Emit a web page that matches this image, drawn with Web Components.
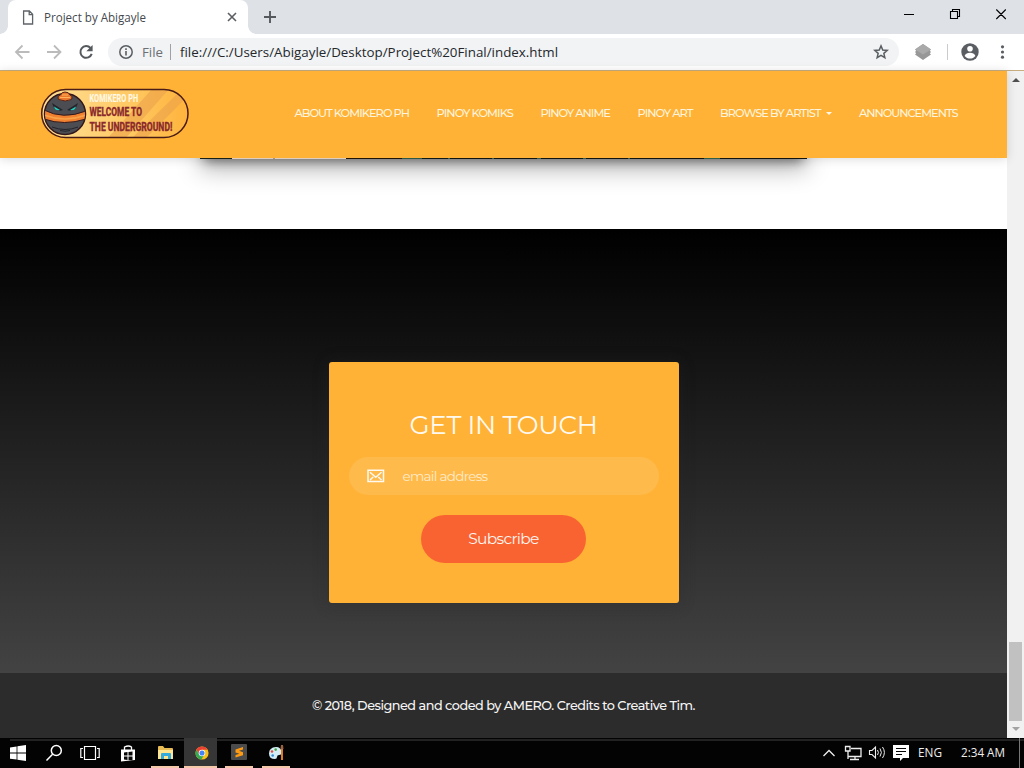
<!DOCTYPE html>
<html lang="en"><head><meta charset="utf-8"><title>Project by Abigayle</title>
<style>body{margin:0;width:1024px;height:768px;overflow:hidden;background:#fff;font-family:"Open Sans","Noto Sans",sans-serif}</style></head>
<body><desk-top></desk-top>
<script>
const define=(name,html,after)=>{
  const t=document.createElement('template');t.innerHTML=html;
  customElements.define(name,class extends HTMLElement{
    connectedCallback(){
      if(this.shadowRoot)return;
      this.attachShadow({mode:'open'}).appendChild(t.content.cloneNode(true));
      if(after)after(this,this.shadowRoot);
    }
  });
};

/* One line of text set to a given width (attribute w), by scaling or, with attribute tight, by tracking. */
define('fit-text',`<style>:host{display:inline-block;white-space:nowrap;flex:none;text-align:left}span{display:inline-block;transform-origin:0 50%}</style><span><slot></slot></span>`,(el,root)=>{
  const s=root.querySelector('span'),w=+el.getAttribute('w'),n=s.getBoundingClientRect().width;
  el.style.width=w+'px';
  if(el.hasAttribute('tight'))s.style.letterSpacing=(w-n)/el.textContent.length+'px';
  else s.style.transform='scaleX('+w/n+')';
});

define('browser-tabs',`<style>
:host{display:flex;height:34px;background:#dee1e6;padding-left:8px;align-items:stretch}
.tab{width:240px;box-sizing:border-box;background:#fff;border-radius:8px 8px 0 0;display:flex;align-items:center;padding:0 10px 0 14px;font-size:12px;color:#45494d;position:relative}
.tab:before,.tab:after{content:"";position:absolute;bottom:0;width:8px;height:8px}
.tab:before{left:-8px;background:radial-gradient(circle at 0 0,transparent 7.5px,#fff 8px)}
.tab:after{right:-8px;background:radial-gradient(circle at 100% 0,transparent 7.5px,#fff 8px)}
.tab fit-text{margin-left:10px;margin-right:auto}
svg{display:block;flex:none}.plus{margin:10px 0 0 15px}.win{margin-left:auto;width:124px;height:34px}
</style>
<div class="tab"><svg width="12" height="15" fill="none" stroke="#5f6368" stroke-width="1.3"><path d="M1.6 1h5.8l3.2 3.3V14h-9zM7.2 1v3.6h3.4"/></svg><fit-text w="102">Project by Abigayle</fit-text>
<svg width="12" height="12" stroke="#5a5e62" stroke-width="1.6"><path d="M2 2l8 8M10 2l-8 8"/></svg></div>
<svg class="plus" width="14" height="14" stroke="#55595d" stroke-width="1.9"><path d="M7 1v12M1 7h12"/></svg>
<svg class="win" fill="none" stroke="#000" stroke-width="1"><path d="M4 14.5h10M50.500 11.500h7v7h-7zM52.500 11.500v-2h7v7h-2M96.300 9.500l9.500 9.500M105.800 9.500l-9.500 9.500" stroke-width="1.1"/></svg>`);

define('address-bar',`<style>
:host{display:flex;height:36px;background:#fff;align-items:center;padding-left:12px;border-bottom:1px solid #c8ad80;font-size:13px;box-sizing:content-box}
svg{display:block;flex:none}.nav{width:96px;height:36px}
.url{width:791px;height:28px;border-radius:14px;background:#f1f3f4;display:flex;align-items:center;box-sizing:border-box;padding:0 10px;color:#24282c}
.file{color:#6c7075;margin-left:8px}.bar{width:1px;height:16px;background:#9fa2a5;margin:0 9px 0 7px}
.star{margin-left:auto}.right{width:125px;height:36px}
</style>
<svg class="nav" fill="none" stroke-width="1.8"><path d="M17.500 18H4.500M10.500 11.500L4 18l6.500 6.500M35 18h13M42 11.500L48.500 18 42 24.500" stroke="#bbb"/><path d="M78.500 14a5.800 5.800 0 1 0 1.200 5.800" stroke="#55595d" stroke-width="2"/><path d="M80.600 11v6.300h-6.300z" fill="#55595d"/></svg>
<div class="url"><svg width="16" height="16"><circle cx="8" cy="8" r="6.200" fill="none" stroke="#5a5e62" stroke-width="1.5"/><path d="M8 7v4.500M8 4.300v1.700" stroke="#5a5e62" stroke-width="1.6"/></svg><fit-text class="file" w="21">File</fit-text><i class="bar"></i><fit-text w="378">file:///C:/Users/Abigayle/Desktop/Project%20Final/index.html</fit-text>
<svg class="star" width="16" height="16" fill="none" stroke="#5a5e62" stroke-width="1.5"><path d="M8 1.900l1.750 4.100 4.450.4-3.350 2.950 1 4.350L8 11.400l-3.850 2.300 1-4.350L1.800 6.400l4.450-.4z"/></svg></div>
<svg class="right"><path d="M16 15.500l8-5.500 8 5.500-1.200 1.200L32 18l-1.200 1.200L32 20.500 24 26l-8-5.500 1.200-1.300L16 18l1.200-1.300z" fill="#979797"/><path d="M16 15.500l8-5.500 8 5.500-8 5z" fill="#a9a9a9"/><path d="M48.500 10v16" stroke="#c9cbcd"/><circle cx="71" cy="18" r="8.700" fill="#5a5e62"/><circle cx="71" cy="14.700" r="2.800" fill="#fff"/><path d="M65.600 22c1.400-4.400 9.400-4.400 10.800 0-2.700 3.400-8.100 3.400-10.800 0z" fill="#fff"/><g fill="#5a5e62"><circle cx="103.500" cy="12.800" r="1.600"/><circle cx="103.500" cy="18" r="1.600"/><circle cx="103.500" cy="23.200" r="1.600"/></g></svg>`);

define('site-logo',`<style>:host{display:block;width:150px;height:52px}svg{display:block}text{font-family:"Roboto","Liberation Sans",sans-serif;font-weight:800}</style>
<svg width="150" height="52" viewBox="0 0 150 52"><defs><clipPath id="p"><rect x="2" y="2" width="146" height="47" rx="23.500"/></clipPath><clipPath id="h"><circle cx="25" cy="26" r="20"/></clipPath><linearGradient id="g"><stop stop-color="#ffdf96"/><stop offset=".6" stop-color="#ffc963"/><stop offset="1" stop-color="#ffb33c"/></linearGradient></defs>
<rect x="2" y="2" width="146" height="47" rx="23.500" fill="url(#g)"/>
<g clip-path="url(#p)"><path d="M113 0h17L84 52H66zM139 4l8 5-43 43H90z" fill="#eba24b" opacity=".6"/></g>
<rect x="1.700" y="1.500" width="146.300" height="48" rx="24" fill="none" stroke="#4a1c17" stroke-width="1.500"/>
<circle cx="25" cy="26" r="20.500" fill="#4b4d53" stroke="#32171b" stroke-width="1.500"/>
<g clip-path="url(#h)"><path d="M4 22q19 10 42 1v8q-22 7-42 0z" fill="#ef8130" stroke="#36191c"/><path d="M4 27q21 8 42 0" stroke="#f9a348" stroke-width="1.500" fill="none"/><path d="M12 15l11 7q-8 3-11-7zM38 15l-11 7q8 3 11-7z" fill="#24242a"/><path d="M14 18.500l6 3.500q-4.500 1.500-6-3.500zM36 18.500l-6 3.500q4.500 1.500 6-3.500z" fill="#22d0c0"/><path d="M12 39q13 5 26 0M20 42.500q5 1.500 10 0" stroke="#24252c" fill="none"/></g>
<path d="M18.500 11.500q-1.500-3.500 2-4.500 1-3 4.500-3 4 0 5 3 3 1 1.500 4.500-6 3-13 0z" fill="#e9782c" stroke="#542119"/><path d="M20 9.500h10M22 7h6" stroke="#ffb25c" stroke-width="1"/>
<text transform="translate(49.500 14.300) scale(.68 1)" font-size="11" fill="#fff8e5" textLength="71.500" lengthAdjust="spacingAndGlyphs">KOMIKERO PH</text>
<g fill="#8b2a2c" stroke="#8b2a2c" stroke-width=".3"><text transform="translate(49.500 28) scale(.6 1)" font-size="13.300" textLength="87.500" lengthAdjust="spacingAndGlyphs">WELCOME TO</text><text transform="translate(49.500 42.500) scale(.6 1)" font-size="13.300" textLength="138" lengthAdjust="spacingAndGlyphs">THE UNDERGROUND!</text></g></svg>`);

define('nav-link',`<style>:host{display:flex;align-items:center;color:#fff4dd;font:500 11.400px/16px "Montserrat","Inter",sans-serif}</style><slot></slot>`);
define('site-nav',`<style>
:host{display:flex;height:87px;background:#ffb236;align-items:center;padding:0 49.500px 0 40px;box-sizing:border-box;box-shadow:0 1px 10px rgba(0,0,0,.15);position:relative;z-index:1}
site-logo{margin-bottom:1px}
nav{margin-left:auto;display:flex;gap:27.500px;margin-bottom:3px}i{border:3px solid transparent;border-top-color:#fff8e8;border-bottom:0;margin-left:5px}
</style><site-logo></site-logo><nav>
<nav-link><fit-text tight w="114.5">ABOUT KOMIKERO PH</fit-text></nav-link><nav-link><fit-text tight w="76.5">PINOY KOMIKS</fit-text></nav-link><nav-link><fit-text tight w="69.5">PINOY ANIME</fit-text></nav-link><nav-link><fit-text tight w="55">PINOY ART</fit-text></nav-link><nav-link><fit-text tight w="100.500">BROWSE BY ARTIST</fit-text><i></i></nav-link><nav-link><fit-text tight w="98.500">ANNOUNCEMENTS</fit-text></nav-link></nav>`);

/* Bottom edge of the picture that is scrolled away under the navigation bar. */
define('picture-edge',`<style>
:host{display:block;height:71px;background:#fff;overflow:hidden;clip-path:inset(0)}
div{width:607px;margin:-19px 0 0 200px;height:20px;box-shadow:0 10px 25px rgba(0,0,0,.3),0 6px 12px -4px rgba(0,0,0,.5);background:linear-gradient(90deg,#18231a 0 32px,#f5dfce 32px 73px,#b99e81 73px 75px,#f5dfce 75px 146px,#221507 146px 202px,#345f4d 202px 222px,#101b16 222px 248px,#416655 248px 250px,#121512 250px 292px,#41664d 292px 294px,#121512 294px 337px,#416655 337px 341px,#121512 341px 383px,#416655 383px 386px,#121512 386px 428px,#416655 428px 430px,#121512 430px 504px,#34664d 504px 520px,#121512 520px)}
</style><div></div>`);

define('touch-card',`<style>
:host{display:flex;flex-direction:column;align-items:center;box-sizing:border-box;width:350px;height:241px;border-radius:3px;background:#ffb236;padding:46px 20px 0;font-family:"Montserrat","Inter",sans-serif;box-shadow:0 1px 15px 1px rgba(39,39,39,.3)}
h4{margin:0;font:400 26px/34px "Montserrat","Inter",sans-serif;color:#fffaf0}
.field{margin-top:15px;width:310px;height:38px;border-radius:19px;background:#ffba4c;display:flex;align-items:center;box-sizing:border-box;padding-left:18px;font-size:13.500px;color:#ffecca}
.field fit-text{margin-left:18px}
button{margin:20px 0 0;border:0;padding:0;width:165px;height:48px;border-radius:24px;background:#f96332;color:#fff6f0;font:400 15.500px/20px "Montserrat","Inter",sans-serif}
</style><h4><fit-text tight w="188">GET IN TOUCH</fit-text></h4>
<div class="field"><svg width="18" height="14" fill="none" stroke="#fffaf0" stroke-width="1.500"><path d="M1 1.200h15.500v11.200H1zM3 3.300l5.750 5 5.750-5M3 11l3.200-3M14.500 11l-3.200-3"/></svg><fit-text tight w="85">email address</fit-text></div>
<button><fit-text tight w="70.500">Subscribe</fit-text></button>`);
define('contact-section',`<style>:host{display:flex;justify-content:center;height:444px;box-sizing:border-box;padding-top:133px;background:linear-gradient(#000,#434343)}</style><touch-card></touch-card>`);
define('site-footer',`<style>:host{display:flex;height:65px;align-items:center;justify-content:center;background:#2c2c2c;color:#f5f5f5;font:500 12.800px/18px "Montserrat","Inter",sans-serif}</style><fit-text tight w="383">© 2018, Designed and coded by AMERO. Credits to Creative Tim.</fit-text>`);

define('scroll-bar',`<style>
:host{display:flex;flex-direction:column;align-items:center;width:17px;background:#f1f1f1;height:667px}
i{border:4px solid transparent}.up{border-bottom-color:#505050;border-top:0;margin-top:7px}.down{border-top-color:#a3a3a3;border-bottom:0;margin:6px 0 7px}.thumb{width:13px;height:79px;background:#c1c1c1;margin-top:auto}
</style><i class="up"></i><div class="thumb"></div><i class="down"></i>`);

define('task-button',`<style>:host{display:flex;width:28px;height:30px;box-sizing:border-box;align-items:center;justify-content:center;flex:none}:host([open]){border-bottom:2px solid #f6c8aa}:host([active]){width:33px;background:#363636}</style><slot></slot>`);
define('task-bar',`<style>
:host{display:flex;height:30px;background:#030303;color:#eee;font-size:12px;padding-left:4px;box-sizing:border-box;align-items:stretch;background-image:linear-gradient(#222,#222);background-size:1014px 2px;background-position:10px 1px;background-repeat:no-repeat}
svg{display:block}.left{display:flex}.tray{margin-left:auto;display:flex;align-items:center}.end{width:4px;height:30px;border-left:1px solid #777;margin-left:14px}
.lang{margin-left:8px}.time{margin-left:19px;margin-bottom:2px}.lang{margin-bottom:1px}
</style><div class="left">
<task-button><svg width="16" height="16" fill="#fff"><path d="M0 2.400l6.600-1v6.200H0zM7.400 1.300L16 0v7.600H7.400zM0 8.400h6.600v6.200L0 13.700zM7.400 8.400H16V16l-8.600-1.300z"/></svg></task-button>
<task-button style="margin-left:8px"><svg width="18" height="18" fill="none" stroke="#fff" stroke-width="1.500"><circle cx="11.300" cy="6.500" r="5"/><path d="M7.600 10.200L1.500 16.500"/></svg></task-button>
<task-button style="margin-left:8px"><svg width="20" height="16" fill="none" stroke="#fff" stroke-width="1.200"><path d="M4.500 1.500h11v13h-11zM3 3.500H.8v9H3M17 3.500h2.200v9H17"/></svg></task-button>
<task-button style="margin-left:10px"><svg width="16" height="17"><path d="M1 4.500h14V15L1 16.500z" fill="#fff"/><path d="M4.500 5V2q4-2 7 0v3" stroke="#fff" stroke-width="1.300" fill="none"/><path d="M4 7.500l3.500-.5v3.500H4zM8.500 7l4-.5v4h-4zM4 11.500h3.500V15L4 14.500zM8.500 11.500h4v4l-4-.5z" fill="#080808"/></svg></task-button>
<task-button open style="margin-left:9px"><svg width="17" height="15"><path d="M1 2q0-1 1-1h4l1.500 2H15q1 0 1 1v10H1z" fill="#e8bc54"/><path d="M1 5h15v9H1z" fill="#ffe590"/><path d="M4 14V9q0-1 1-1h8q1 0 1 1v5h-3v-3H7v3z" fill="#35aadd"/></svg></task-button>
<task-button open active style="margin-left:5px"><svg style="margin:1px 0 0 3px" width="14" height="14" viewBox="0 0 16 16"><circle cx="8" cy="8" r="7.500" fill="#fbc116"/><path d="M1.500 4.200A7.500 7.500 0 0 1 14.500 4.300H8L5 9.700z" fill="#ea4335"/><path d="M1.500 4.300A7.500 7.500 0 0 0 7.300 15.500L10.600 10 4.800 10z" fill="#34a853"/><circle cx="8" cy="8" r="3.700" fill="#fff"/><circle cx="8" cy="8" r="2.900" fill="#4285f4"/></svg></task-button>
<task-button open style="margin-left:8px"><svg width="16" height="16"><rect width="16" height="16" rx="1" fill="#4b4b4b"/><path d="M12 3v2.500L8 6.800l4 1.400v3L4.500 13.500V11l4-1.200-4-1.400v-3z" fill="#ff9a13"/></svg></task-button>
<task-button open style="margin-left:9px"><svg width="17" height="17"><path d="M8 3Q1 3.500 1 9.500q0 5.500 6 5.500 2 0 2-2t2-2q3 0 2.500-3.500Q12.500 2.800 8 3z" fill="#d3edf7"/><circle cx="4" cy="7.500" r="1.300" fill="#e44b40"/><circle cx="7.700" cy="5.600" r="1.300" fill="#45a642"/><circle cx="4.700" cy="11.500" r="1.300" fill="#348bd0"/><path d="M14 5v11" stroke="#dd7a22" stroke-width="2"/><path d="M12.500 5l.5-4h2l.5 4z" fill="#9b6240"/></svg></task-button></div>
<div class="tray"><svg width="90" height="30" fill="none" stroke="#eee" stroke-width="1.300"><path d="M3.500 18l5.500-5.500 5.500 5.500"/><path d="M31 10.500h10v8H28M25.500 8.500h4.500v4.500h-4.500zM28 13v8M35 18.500v3M30 21.500h9"/><path d="M49.500 12.500H52l3.500-3.500v11L52 16.500h-2.500z" stroke-width="1.100"/><path d="M57.500 12q1.800 2.500 0 5M60 10.500q2.800 4 0 8M62.500 9q3.800 5.500 0 11" stroke-width="1"/><path d="M73 7h16v13h-6l-3 3v-3h-7z" fill="#fff" stroke="none"/><path d="M76 10.500h10M76 13.500h10M76 16.500h6" stroke="#050505" stroke-width="1"/></svg>
<fit-text class="lang" w="24">ENG</fit-text><fit-text class="time" w="44">2:34 AM</fit-text><div class="end"></div></div>`);

define('desk-top',`<style>:host{display:block;width:1024px;height:768px;overflow:hidden}.view{display:flex;height:667px}main{width:1007px}</style>
<browser-tabs></browser-tabs><address-bar></address-bar><div class="view"><main><site-nav></site-nav><picture-edge></picture-edge><contact-section></contact-section><site-footer></site-footer></main><scroll-bar></scroll-bar></div><task-bar></task-bar>`);
</script></body></html>
